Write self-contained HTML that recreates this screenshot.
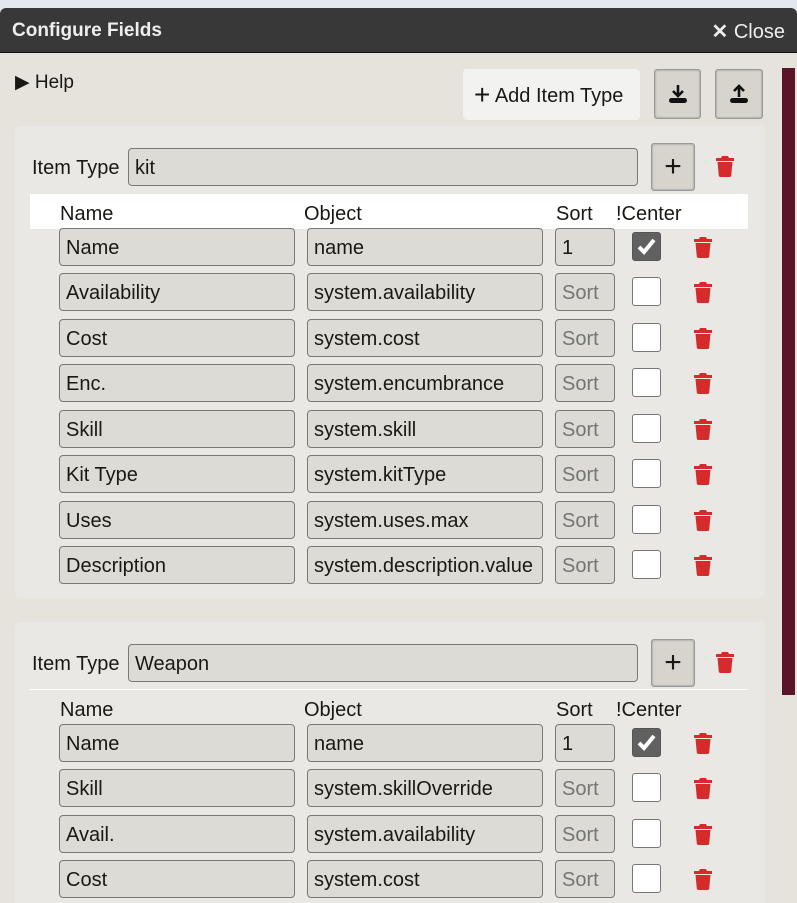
<!DOCTYPE html>
<html><head><style>
*{box-sizing:border-box}
html,body{margin:0;width:797px;height:903px;overflow:hidden}
body{background:#e6e3dc;font-family:"Liberation Sans",sans-serif;font-size:20px;color:#191813;position:relative}
.top{position:absolute;left:0;top:0;width:797px;height:10px;background:#e3e8ee}
.hdr{position:absolute;left:0;top:8px;width:797px;height:45px;background:#383838;border-radius:6px 6px 0 0;border-bottom:1px solid #111;color:#eee}
.hdr .t{position:absolute;left:12px;top:12px;font-weight:bold;font-size:19px}
.hdr .c{position:absolute;right:12px;top:11px;font-size:20px}
.abs{position:absolute}
.help{left:15px;top:71px;font-size:19px}
.btn{position:absolute;border:1px solid #999;border-radius:3px;background:#d6d4cc;box-shadow:0 0 2px #888 inset;display:flex;align-items:center;justify-content:center}
.panel{position:absolute;left:15px;width:750px;background:#e9e8e4;border-radius:6px}
.inp{position:absolute;height:38px;border:1px solid #7a7971;border-radius:4px;background:#dcdbd5;padding:0 6px;line-height:38px;white-space:nowrap;overflow:hidden}
.ph{color:#757575}
.cb{position:absolute;width:29px;height:29px;border:1px solid #777;border-radius:3px;background:#fff}
.cb.on{background:#606060;border-color:#555}
.lbl{position:absolute}
.sb{position:absolute;left:782px;top:68px;width:13px;height:627px;background:#5b1529}
</style></head><body>
<div class="top"></div>
<div class="hdr"><span class="t">Configure Fields</span><span class="c"><b>✕</b> Close</span></div>
<div class="sb"></div>
<div class="abs help">▶ Help</div>
<div class="abs" style="left:463px;top:69px;width:177px;height:51px;background:#f2f2f0;border-radius:4px;font-size:20px;line-height:51px;padding-left:11px"><span style="font-size:28px;vertical-align:-2px">+</span> Add Item Type</div>
<div class="btn" style="left:654px;top:69px;width:47px;height:50px"><svg width="22" height="22" viewBox="0 0 22 22"><path d="M11 2v10M6 8l5 5 5-5" stroke="#111" stroke-width="2.6" fill="none"/><rect x="2" y="15" width="18" height="5" rx="2.5" fill="#111"/></svg></div>
<div class="btn" style="left:715px;top:69px;width:48px;height:50px"><svg width="22" height="22" viewBox="0 0 22 22"><path d="M11 14V3M6 8l5-5 5 5" stroke="#111" stroke-width="2.6" fill="none"/><rect x="2" y="15" width="18" height="5" rx="2.5" fill="#111"/></svg></div>

<div class="panel" style="top:126px;height:472px"></div>
<div class="panel" style="top:622px;height:290px"></div>
<div class="abs" style="left:30px;top:194px;width:718px;height:35px;background:#fff"></div>
<div class="abs" style="left:30px;top:689px;width:718px;height:1px;background:#fff"></div>

<div id="c"></div>
<script>
function trash(x,y){return '<svg class="abs" style="left:'+x+'px;top:'+y+'px" width="20" height="22" viewBox="0 0 20 22"><path d="M7 1h6l1 2h5v3H1V3h5z" fill="#d52b2b"/><path d="M2.5 7h15l-1.3 13.5q-.2 1.5-1.7 1.5H5.5q-1.5 0-1.7-1.5z" fill="#d52b2b"/></svg>';}
var h='';
function section(y0,name,rows,rowTop){
 h+='<div class="lbl" style="left:32px;top:'+(y0+9)+'px">Item Type</div>';
 h+='<div class="inp" style="left:128px;top:'+y0+'px;width:510px">'+name+'</div>';
 h+='<div class="btn" style="left:651px;top:'+(y0-5)+'px;width:44px;height:48px;font-size:30px">+</div>';
 h+=trash(715,y0+7);
 var hy=rowTop-25;
 h+='<div class="lbl" style="left:60px;top:'+hy+'px">Name</div><div class="lbl" style="left:304px;top:'+hy+'px">Object</div><div class="lbl" style="left:556px;top:'+hy+'px">Sort</div><div class="lbl" style="left:616px;top:'+hy+'px">!Center</div>';
 rows.forEach(function(r,i){var y=Math.round(rowTop+i*45.43);
  h+='<div class="inp" style="left:59px;top:'+y+'px;width:236px">'+r[0]+'</div>';
  h+='<div class="inp" style="left:307px;top:'+y+'px;width:236px">'+r[1]+'</div>';
  h+='<div class="inp" style="left:555px;top:'+y+'px;width:60px">'+(i==0?'1':'<span class="ph">Sort</span>')+'</div>';
  h+='<div class="cb'+(i==0?' on':'')+'" style="left:632px;top:'+(y+4)+'px">'+(i==0?'<svg width="27" height="27" viewBox="0 0 27 27"><path d="M6 14l5 5 10-12" stroke="#fff" stroke-width="4" fill="none"/></svg>':'')+'</div>';
  h+=trash(693,y+8);
 });
}
section(148,'kit',[['Name','name'],['Availability','system.availability'],['Cost','system.cost'],['Enc.','system.encumbrance'],['Skill','system.skill'],['Kit Type','system.kitType'],['Uses','system.uses.max'],['Description','system.description.value']],228);
section(644,'Weapon',[['Name','name'],['Skill','system.skillOverride'],['Avail.','system.availability'],['Cost','system.cost']],724);
document.getElementById('c').innerHTML=h;
</script>
</body></html>
